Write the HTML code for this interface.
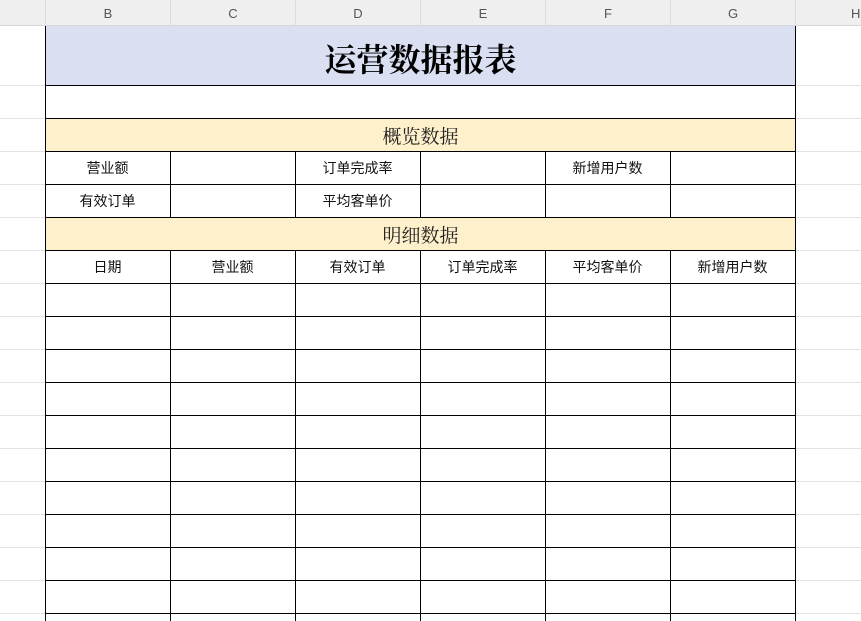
<!DOCTYPE html>
<html><head><meta charset="utf-8"><style>
body{margin:0;width:861px;height:621px;overflow:hidden;background:#fff;font-family:"Liberation Sans","Noto Sans CJK SC",sans-serif;position:relative}
.a{position:absolute;box-sizing:border-box}
.hd{top:0;height:26px;background:#efefef;border-bottom:1px solid #d8d8d8;font-size:13px;color:#555;text-align:center;line-height:28px;border-left:1px solid #dcdcdc}
.gl{height:1px;background:#e2e2e2;left:0;width:861px}
.c{font-size:14px;color:#111;text-align:center;line-height:32px}
.vl{width:1px;background:#000}
.hl{height:1px;background:#000;left:45px;width:751px}
</style></head><body>
<div class="a hd" style="left:0;width:46px;border-left:none"></div>
<div class="a hd" style="left:45px;width:125px">B</div>
<div class="a hd" style="left:170px;width:125px">C</div>
<div class="a hd" style="left:295px;width:125px">D</div>
<div class="a hd" style="left:420px;width:125px">E</div>
<div class="a hd" style="left:545px;width:125px">F</div>
<div class="a hd" style="left:670px;width:125px">G</div>
<div class="a hd" style="left:795px;width:70px;text-align:left;padding-left:55px">H</div>
<div id="g"></div>
<div class="a" style="left:45px;top:26px;width:751px;height:59px;background:#dae0f2"></div>
<div class="a" style="left:45px;top:118px;width:751px;height:33px;background:#fff0cc"></div>
<div class="a" style="left:45px;top:217px;width:751px;height:33px;background:#fff0cc"></div>
<div class="a" style="left:45px;top:35px;width:751px;text-align:center;font-family:'Liberation Serif','Noto Serif CJK SC',serif;font-weight:bold;font-size:32px;color:#000">运营数据报表</div>
<div class="a" style="left:45px;top:122px;width:751px;text-align:center;font-family:'Liberation Serif','Noto Serif CJK SC',serif;font-size:19px;color:#222">概览数据</div>
<div class="a" style="left:45px;top:221px;width:751px;text-align:center;font-family:'Liberation Serif','Noto Serif CJK SC',serif;font-size:19px;color:#222">明细数据</div>
<div id="t"></div>
<script>
var h='';
var rows=[85,118,151,184,217,250,283,316,349,382,415,448,481,514,547,580,613];
for(var y=0;y<rows.length;y++)h+='<div class="a gl" style="top:'+rows[y]+'px"></div>';
document.getElementById('g').innerHTML=h;
var s='';
for(var i=0;i<rows.length;i++)s+='<div class="a hl" style="top:'+rows[i]+'px"></div>';
var xs=[45,170,295,420,545,670,795];
s+='<div class="a vl" style="left:45px;top:26px;height:595px"></div>';
s+='<div class="a vl" style="left:795px;top:26px;height:595px"></div>';
for(var j=1;j<6;j++){s+='<div class="a vl" style="left:'+xs[j]+'px;top:151px;height:66px"></div>';s+='<div class="a vl" style="left:'+xs[j]+'px;top:250px;height:371px"></div>';}
function cell(c,r,t){s+='<div class="a c" style="left:'+xs[c]+'px;top:'+r+'px;width:125px">'+t+'</div>';}
cell(0,152,'营业额');cell(2,152,'订单完成率');cell(4,152,'新增用户数');
cell(0,185,'有效订单');cell(2,185,'平均客单价');
var hh=['日期','营业额','有效订单','订单完成率','平均客单价','新增用户数'];
for(var k=0;k<6;k++)cell(k,251,hh[k]);
document.getElementById('t').innerHTML=s;
</script>
</body></html>
